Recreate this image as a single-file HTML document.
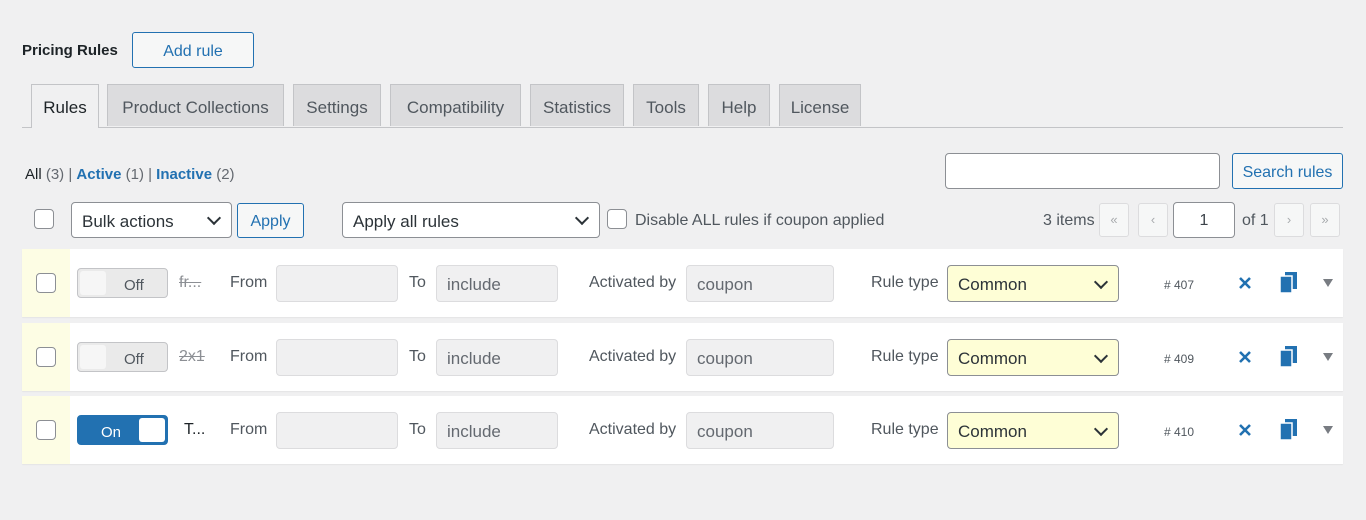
<!DOCTYPE html><html><head><style>
body{margin:0;width:1366px;height:520px;background:#f0f0f1;font-family:"Liberation Sans",sans-serif;color:#3c434a;position:relative;overflow:hidden;font-size:16px}
.a{position:absolute}
.tab{position:absolute;top:84px;height:42px;background:#dcdcde;border:1px solid #c3c4c7;border-bottom:none;box-sizing:border-box;font-size:17px;line-height:46px;text-align:center;color:#50575e}
.btn{position:absolute;border:1px solid #2271b1;border-radius:3px;color:#2271b1;background:#f6f7f7;box-sizing:border-box;text-align:center}
.sel{position:absolute;border:1px solid #8c8f94;border-radius:4px;background:#fff;box-sizing:border-box;padding-left:10px;font-size:17px;color:#2c3338}
.sel:after{content:"";position:absolute;right:12px;top:50%;width:8px;height:8px;border-right:2px solid #2c3338;border-bottom:2px solid #2c3338;transform:translateY(-70%) rotate(45deg)}
.cb{position:absolute;width:18px;height:18px;border:1px solid #8c8f94;border-radius:4px;background:#fff}
.row{position:absolute;left:22px;width:1321px;height:68px;background:#fff;box-shadow:0 1px 1px rgba(0,0,0,.05)}
.row .y{position:absolute;left:0;top:0;width:48px;height:68px;background:#fdfde4}
.in{position:absolute;background:#f0f0f1;border:1px solid #dcdcde;border-radius:4px;box-sizing:border-box;height:37px;top:16px;font-size:17px;color:#646970;padding-left:10px;line-height:38px}
.lbl{position:absolute;top:25px;font-size:16px;color:#50575e}
.pg{position:absolute;top:203px;width:30px;height:34px;border:1px solid #dcdcde;border-radius:3px;background:#f6f7f7;box-sizing:border-box;color:#a7aaad;text-align:center;line-height:32px;font-size:13px}
.x{position:absolute;left:1216px;top:27px}
</style></head><body>
<div class="a" style="left:22px;top:42px;font-weight:bold;font-size:15px;color:#1d2327">Pricing Rules</div>
<div class="btn" style="left:132px;top:32px;width:122px;height:36px;line-height:37px;font-size:16px">Add rule</div>
<div class="a" style="left:22px;top:127px;width:1321px;height:1px;background:#c3c4c7"></div>
<div class="tab" style="left:31px;width:68px;background:#f0f0f1;color:#1d2327;height:44px">Rules</div>
<div class="tab" style="left:107px;width:177px">Product Collections</div>
<div class="tab" style="left:293px;width:88px">Settings</div>
<div class="tab" style="left:390px;width:131px">Compatibility</div>
<div class="tab" style="left:530px;width:94px">Statistics</div>
<div class="tab" style="left:633px;width:66px">Tools</div>
<div class="tab" style="left:708px;width:62px">Help</div>
<div class="tab" style="left:779px;width:82px">License</div>
<div class="a" style="left:25px;top:166px;font-size:15px;color:#646970"><b style="color:#1d2327;font-weight:normal">All</b> (3) | <b style="color:#2271b1">Active</b> (1) | <b style="color:#2271b1">Inactive</b> (2)</div>
<div class="a" style="left:945px;top:153px;width:275px;height:36px;background:#fff;border:1px solid #8c8f94;border-radius:4px;box-sizing:border-box"></div>
<div class="btn" style="left:1232px;top:153px;width:111px;height:36px;line-height:37px;font-size:16px">Search rules</div>
<div class="cb" style="left:34px;top:209px"></div>
<div class="sel" style="left:71px;top:202px;width:161px;height:36px;line-height:37px">Bulk actions</div>
<div class="btn" style="left:237px;top:203px;width:67px;height:35px;line-height:36px;font-size:16px">Apply</div>
<div class="sel" style="left:342px;top:202px;width:258px;height:36px;line-height:37px">Apply all rules</div>
<div class="cb" style="left:607px;top:209px"></div>
<div class="a" style="left:635px;top:212px;font-size:16px;color:#50575e">Disable ALL rules if coupon applied</div>
<div class="a" style="left:1043px;top:212px;font-size:16px;color:#50575e">3 items</div>
<div class="pg" style="left:1099px">«</div><div class="pg" style="left:1138px">‹</div>
<div class="a" style="left:1173px;top:202px;width:62px;height:36px;border:1px solid #8c8f94;border-radius:4px;background:#fff;box-sizing:border-box;text-align:center;line-height:36px;font-size:16px">1</div>
<div class="a" style="left:1242px;top:212px;font-size:16px;color:#50575e">of 1</div>
<div class="pg" style="left:1274px">›</div><div class="pg" style="left:1310px">»</div>

<div class="row" style="top:249px"><div class="y"></div><div class="cb" style="left:14px;top:24px"></div>
<div class="a" style="left:55px;top:19px;width:91px;height:30px;border:1px solid #c3c4c7;border-radius:4px;background:#eaeaea;box-sizing:border-box"><div class="a" style="left:2px;top:2px;width:26px;height:24px;background:#f6f6f6;border-radius:3px"></div><div class="a" style="left:46px;top:8px;font-size:15px;color:#50575e">Off</div></div>
<div class="lbl" style="left:157px;text-decoration:line-through;color:#8c8f94">fr...</div>
<div class="lbl" style="left:208px">From</div><div class="in" style="left:254px;width:122px"></div>
<div class="lbl" style="left:387px">To</div><div class="in" style="left:414px;width:122px">include</div>
<div class="lbl" style="left:567px">Activated by</div><div class="in" style="left:664px;width:148px">coupon</div>
<div class="lbl" style="left:849px">Rule type</div><div class="sel" style="left:925px;top:16px;width:172px;height:37px;line-height:38px;background:#fefed6">Common</div>
<div class="a" style="left:1142px;top:29px;font-size:12px;color:#50575e"># 407</div>
<svg class="x" width="14" height="14"><path d="M2 2L12 12M12 2L2 12" stroke="#2271b1" stroke-width="2.6"/></svg>
<svg class="a" style="left:1258px;top:23px" width="18" height="22"><rect x="5" y="0" width="12" height="17" fill="#2271b1"/><rect x="0" y="4" width="12" height="17" fill="#2271b1" stroke="#fff" stroke-width="1.5"/></svg>
<div class="a" style="left:1301px;top:30px;width:0;height:0;border-left:5px solid transparent;border-right:5px solid transparent;border-top:8px solid #787c82"></div>
</div>

<div class="row" style="top:323px"><div class="y"></div><div class="cb" style="left:14px;top:24px"></div>
<div class="a" style="left:55px;top:19px;width:91px;height:30px;border:1px solid #c3c4c7;border-radius:4px;background:#eaeaea;box-sizing:border-box"><div class="a" style="left:2px;top:2px;width:26px;height:24px;background:#f6f6f6;border-radius:3px"></div><div class="a" style="left:46px;top:8px;font-size:15px;color:#50575e">Off</div></div>
<div class="lbl" style="left:157px;text-decoration:line-through;color:#8c8f94">2x1</div>
<div class="lbl" style="left:208px">From</div><div class="in" style="left:254px;width:122px"></div>
<div class="lbl" style="left:387px">To</div><div class="in" style="left:414px;width:122px">include</div>
<div class="lbl" style="left:567px">Activated by</div><div class="in" style="left:664px;width:148px">coupon</div>
<div class="lbl" style="left:849px">Rule type</div><div class="sel" style="left:925px;top:16px;width:172px;height:37px;line-height:38px;background:#fefed6">Common</div>
<div class="a" style="left:1142px;top:29px;font-size:12px;color:#50575e"># 409</div>
<svg class="x" width="14" height="14"><path d="M2 2L12 12M12 2L2 12" stroke="#2271b1" stroke-width="2.6"/></svg>
<svg class="a" style="left:1258px;top:23px" width="18" height="22"><rect x="5" y="0" width="12" height="17" fill="#2271b1"/><rect x="0" y="4" width="12" height="17" fill="#2271b1" stroke="#fff" stroke-width="1.5"/></svg>
<div class="a" style="left:1301px;top:30px;width:0;height:0;border-left:5px solid transparent;border-right:5px solid transparent;border-top:8px solid #787c82"></div>
</div>

<div class="row" style="top:396px"><div class="y"></div><div class="cb" style="left:14px;top:24px"></div>
<div class="a" style="left:55px;top:19px;width:91px;height:30px;border:1px solid #2271b1;border-radius:4px;background:#2271b1;box-sizing:border-box"><div class="a" style="right:2px;top:2px;width:26px;height:24px;background:#fff;border-radius:3px"></div><div class="a" style="left:23px;top:8px;font-size:15px;color:#fff">On</div></div>
<div class="lbl" style="left:162px;color:#1d2327">T...</div>
<div class="lbl" style="left:208px">From</div><div class="in" style="left:254px;width:122px"></div>
<div class="lbl" style="left:387px">To</div><div class="in" style="left:414px;width:122px">include</div>
<div class="lbl" style="left:567px">Activated by</div><div class="in" style="left:664px;width:148px">coupon</div>
<div class="lbl" style="left:849px">Rule type</div><div class="sel" style="left:925px;top:16px;width:172px;height:37px;line-height:38px;background:#fefed6">Common</div>
<div class="a" style="left:1142px;top:29px;font-size:12px;color:#50575e"># 410</div>
<svg class="x" width="14" height="14"><path d="M2 2L12 12M12 2L2 12" stroke="#2271b1" stroke-width="2.6"/></svg>
<svg class="a" style="left:1258px;top:23px" width="18" height="22"><rect x="5" y="0" width="12" height="17" fill="#2271b1"/><rect x="0" y="4" width="12" height="17" fill="#2271b1" stroke="#fff" stroke-width="1.5"/></svg>
<div class="a" style="left:1301px;top:30px;width:0;height:0;border-left:5px solid transparent;border-right:5px solid transparent;border-top:8px solid #787c82"></div>
</div>
</body></html>
